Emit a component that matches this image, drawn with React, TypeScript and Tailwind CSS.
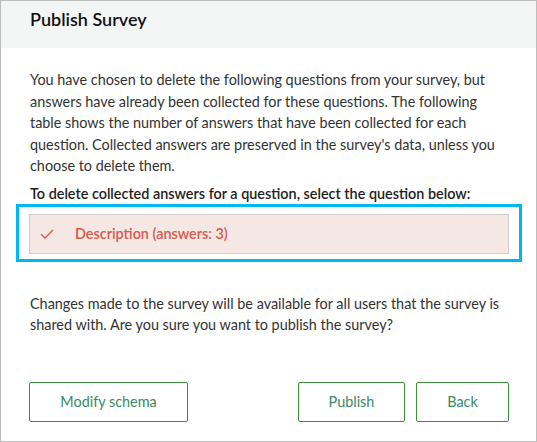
import React from "react";

export default function App() {
  return (
    <div
      className="w-[537px] h-[442px] bg-white border border-[#bdbdbd] flex flex-col text-[#1f1f1f]"
      style={{ fontFamily: "Lato, 'Noto Sans', sans-serif" }}
    >
      <div className="h-[47px] bg-[#f4f6f6] flex items-start pt-[5px] pl-[29px] shrink-0">
        <h1 className="text-[18px] leading-[27px] font-semibold text-[#111]">Publish Survey</h1>
      </div>
      <div className="flex flex-col pl-[28px] pr-[27px] pt-[21px]">
        <p className="pl-px text-[14.4px] leading-[21.5px] text-[#333]">
          You have chosen to delete the following questions from your survey, but answers have already been collected for these questions. The following table shows the number of answers that have been collected for each question. Collected answers are preserved in the survey's data, unless you choose to delete them.
        </p>
        <p className="pl-px mt-[7px] text-[14.4px] leading-[20px] font-semibold text-[#222]">
          To delete collected answers for a question, select the question below:
        </p>
        <div className="-mx-[13px] border-[3px] border-[#00b8f0] px-[10px] pt-[7px] pb-[5px]">
          <div className="h-[40px] bg-[#f5e8e4] border border-[#cfcfcf] flex items-center">
            <svg width="14" height="10" viewBox="0 0 14 10" className="ml-[10px]">
              <path d="M1 5 L5 9 L13 1" fill="none" stroke="#d9584a" strokeWidth="1.3" />
            </svg>
            <span className="ml-[21px] text-[14.4px] font-semibold text-[#d9584a]">
              Description (answers: 3)
            </span>
          </div>
        </div>
        <p className="pl-px mt-[31px] text-[14.4px] leading-[21.5px] text-[#333]">
          Changes made to the survey will be available for all users that the survey is shared with. Are you sure you want to publish the survey?
        </p>
        <div className="mt-[46px] flex items-center">
          <button className="w-[159px] h-[40px] border border-[#3f8f3a] rounded-[2px] text-[14.4px] text-[#3a8a66]">
            Modify schema
          </button>
          <div className="flex-1" />
          <button className="w-[107px] h-[40px] border border-[#3f8f3a] rounded-[2px] text-[14.4px] text-[#3a8a66]">
            Publish
          </button>
          <button className="ml-[11px] w-[93px] h-[40px] border border-[#3f8f3a] rounded-[2px] text-[14.4px] text-[#3a8a66]">
            Back
          </button>
        </div>
      </div>
    </div>
  );
}
